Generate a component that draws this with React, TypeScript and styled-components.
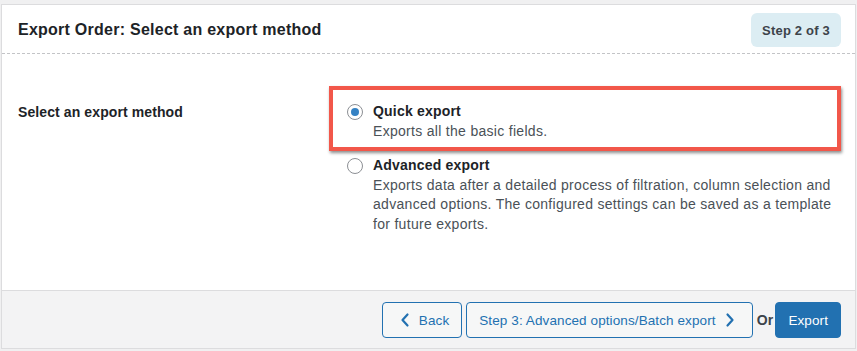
import React, {useState} from "react";
import styled, {createGlobalStyle} from "styled-components";

const GlobalStyle = createGlobalStyle`
html, body {
  margin: 0;
  padding: 0;
  background: #f0f0f1;
  font-family: "Liberation Sans", Arial, sans-serif;
  letter-spacing: 0.2px;
  color: #1d2327;
}
* { box-sizing: border-box; }
`;

const Page = styled.div`
padding: 4px 1px 1px 1px;
`;

const Card = styled.div`
background: #fff;
border: 1px solid #dcdcde;
display: flex;
flex-direction: column;
`;

const Header = styled.div`
display: flex;
align-items: center;
justify-content: space-between;
padding: 8px 14px 6px 16px;
border-bottom: 1px dashed #c3c4c7;
`;

const Title = styled.h2`
margin: 0;
font-size: 16px;
font-weight: 600;
letter-spacing: 0.25px;
color: #1d2327;
`;

const StepBadge = styled.div`
background: #dcedf3;
border-radius: 6px;
height: 34px;
padding: 0 11px;
display: flex;
align-items: center;
font-size: 13px;
font-weight: 700;
color: #3c434a;
`;

const Body = styled.div`
display: grid;
grid-template-columns: 329px 1fr;
padding: 48px 15px 56px 16px;
`;

const Label = styled.div`
font-size: 14px;
font-weight: 600;
line-height: 20px;
letter-spacing: 0.1px;
color: #1d2327;
`;

const OptionList = styled.div`
display: flex;
flex-direction: column;
gap: 15px;
`;

const Option = styled.label<{$highlight?: boolean}>`
position: relative;
display: flex;
gap: 10px;
cursor: pointer;
${(p) => p.$highlight && `
  &::before {
    content: "";
    position: absolute;
    left: -18px;
    top: -16px;
    right: -1px;
    bottom: -10px;
    border: 4px solid #f2574a;
    box-shadow: 1px 2px 3px rgba(0, 0, 0, 0.45);
    pointer-events: none;
  }
`}
`;

const Radio = styled.span<{$checked: boolean}>`
flex: none;
width: 16px;
height: 16px;
margin-top: 2px;
border-radius: 50%;
border: 1px solid #8c8f94;
background: #fff;
display: flex;
align-items: center;
justify-content: center;
&::after {
  content: "";
  width: 8px;
  height: 8px;
  border-radius: 50%;
  background: ${(p) => (p.$checked ? "#3582c4" : "transparent")};
}
`;

const OptionText = styled.div`
display: flex;
flex-direction: column;
font-size: 14px;
line-height: 19.5px;
`;

const OptionTitle = styled.span`
font-weight: 600;
color: #1d2327;
`;

const OptionDesc = styled.span`
color: #4a5157;
letter-spacing: 0.3px;
white-space: nowrap;
`;

const Footer = styled.div`
display: flex;
align-items: center;
justify-content: flex-end;
gap: 4px;
padding: 11px 14px 10px 16px;
background: #f3f3f4;
border-top: 1px solid #dcdcde;
`;

const Button = styled.button<{$primary?: boolean}>`
height: 36px;
display: flex;
align-items: center;
gap: 4px;
padding: 0 12px;
border-radius: 4px;
font-family: inherit;
font-size: 13.5px;
letter-spacing: 0.1px;
cursor: pointer;
border: 1px solid #2271b1;
color: ${(p) => (p.$primary ? "#fff" : "#2271b1")};
background: ${(p) => (p.$primary ? "#2271b1" : "#f6f7f7")};
`;

const OrText = styled.span`
margin-right: -2px;
font-size: 14px;
font-weight: 700;
color: #3c434a;
`;

const Chevron = ({dir}: {dir: "left" | "right"}) => (
  <svg width="20" height="20" viewBox="0 0 20 20">
    <path
      d={dir === "left" ? "M12.5 4.5 L7.5 10 L12.5 15.5" : "M7.5 4.5 L12.5 10 L7.5 15.5"}
      fill="none"
      stroke="#2271b1"
      strokeWidth="2.2"
      strokeLinecap="round"
      strokeLinejoin="round"
    />
  </svg>
);

const options = [
  {
    id: "quick",
    title: "Quick export",
    desc: ["Exports all the basic fields."],
  },
  {
    id: "advanced",
    title: "Advanced export",
    desc: [
      "Exports data after a detailed process of filtration, column selection and",
      "advanced options. The configured settings can be saved as a template",
      "for future exports.",
    ],
  },
];

const App = () => {
  const [method, setMethod] = useState("quick");

  return (
    <Page>
      <GlobalStyle />
      <Card>
        <Header>
          <Title>Export Order: Select an export method</Title>
          <StepBadge>Step 2 of 3</StepBadge>
        </Header>
        <Body>
          <Label>Select an export method</Label>
          <OptionList>
            {options.map((o) => (
              <Option
                key={o.id}
                $highlight={o.id === "quick"}
                onClick={() => setMethod(o.id)}
              >
                <Radio $checked={method === o.id} />
                <OptionText>
                  <OptionTitle>{o.title}</OptionTitle>
                  {o.desc.map((line) => (
                    <OptionDesc key={line}>{line}</OptionDesc>
                  ))}
                </OptionText>
              </Option>
            ))}
          </OptionList>
        </Body>
        <Footer>
          <Button>
            <Chevron dir="left" />
            Back
          </Button>
          <Button>
            Step 3: Advanced options/Batch export
            <Chevron dir="right" />
          </Button>
          <OrText>Or</OrText>
          <Button $primary>Export</Button>
        </Footer>
      </Card>
    </Page>
  );
};

export default App;
